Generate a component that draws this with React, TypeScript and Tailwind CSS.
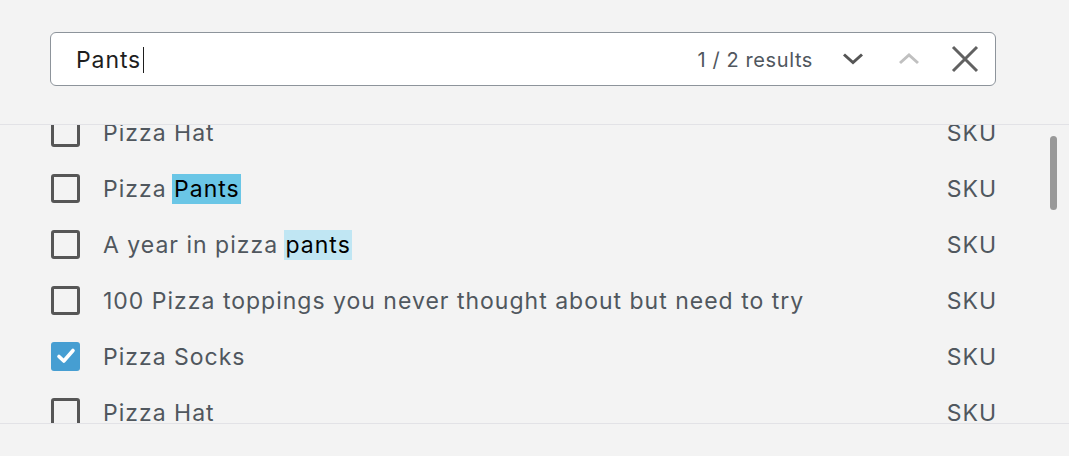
import React from "react";

const rows: { label: React.ReactNode; checked?: boolean }[] = [
  { label: "Pizza Hat" },
  {
    label: (
      <>
        Pizza <span className="inline-block leading-[30px] bg-[#6ac6e6] text-black pr-[1px] -ml-[2px] pl-[2px]">Pants</span>
      </>
    ),
  },
  {
    label: (
      <>
        A year in pizza <span className="inline-block leading-[30px] bg-[#c0e6f3] text-black pr-[1px] -ml-[2px] pl-[2px]">pants</span>
      </>
    ),
  },
  { label: "100 Pizza toppings you never thought about but need to try" },
  { label: "Pizza Socks", checked: true },
  { label: "Pizza Hat" },
];

function Checkbox({ checked }: { checked?: boolean }) {
  if (checked) {
    return (
      <div className="w-[29px] h-[29px] rounded-[3px] bg-[#469ed2] flex items-center justify-center shrink-0">
        <svg width="22" height="22" viewBox="0 0 22 22" fill="none">
          <path d="M4 11.5 L8.8 16 L18 5.5" stroke="white" strokeWidth="3.6" strokeLinecap="round" strokeLinejoin="round" />
        </svg>
      </div>
    );
  }
  return <div className="w-[29px] h-[29px] rounded-[3px] border-[3px] border-[#565656] shrink-0" />;
}

export default function App() {
  return (
    <div className="w-[1082px] h-[456px] bg-white flex" style={{ fontFamily: "Inter, 'Noto Sans', sans-serif" }}>
      <div className="w-[1069px] h-full bg-[#f3f3f3] flex flex-col">
        <div className="h-[125px] border-b border-[#e2e2e6] pl-[50px] pr-[73px] pt-[32px]">
          <div className="h-[54px] bg-white border border-[#8d949b] rounded-[6px] flex items-center pl-[25px] pr-[16px]">
            <div className="flex items-center text-[23px] text-[#1e1e1e] tracking-[0.9px] pt-[3px]">
              Pants<span className="inline-block w-[1px] h-[26px] bg-[#1e1e1e] ml-[2px] -mt-[2px]" />
            </div>
            <div className="flex-1" />
            <span className="text-[20px] text-[#50575e] tracking-[0.6px] mr-[28px] pt-[2px]">1 / 2 results</span>
            <svg width="24" height="24" viewBox="0 0 24 24" className="mr-[32px]">
              <path d="M3 7.5 L12 15.5 L21 7.5" stroke="#555" strokeWidth="3" fill="none" />
            </svg>
            <svg width="24" height="24" viewBox="0 0 24 24" className="mr-[30px]">
              <path d="M3 16 L12 8 L21 16" stroke="#c0c0c0" strokeWidth="3" fill="none" />
            </svg>
            <svg width="28" height="28" viewBox="0 0 28 28">
              <path d="M2 2 L26 26 M26 2 L2 26" stroke="#616161" strokeWidth="3" fill="none" />
            </svg>
          </div>
        </div>
        <div className="h-[299px] overflow-hidden relative border-b border-[#e2e2e6]">
          <div className="-mt-[21px]">
            {rows.map((r, i) => (
              <div key={i} className="h-[56px] flex items-center pl-[51px] pr-[73px]">
                <Checkbox checked={r.checked} />
                <div className="ml-[23px] flex-1 text-[23px] text-[#50575e] tracking-[1px] pt-[2px]">{r.label}</div>
                <div className="text-[23px] text-[#50575e] tracking-[1px] -mr-[1px] pt-[2px]">SKU</div>
              </div>
            ))}
          </div>
          <div className="absolute left-[1050px] top-[11px] w-[7px] h-[74px] rounded-full bg-[#999999]" />
        </div>
        <div className="flex-1" />
      </div>
    </div>
  );
}
